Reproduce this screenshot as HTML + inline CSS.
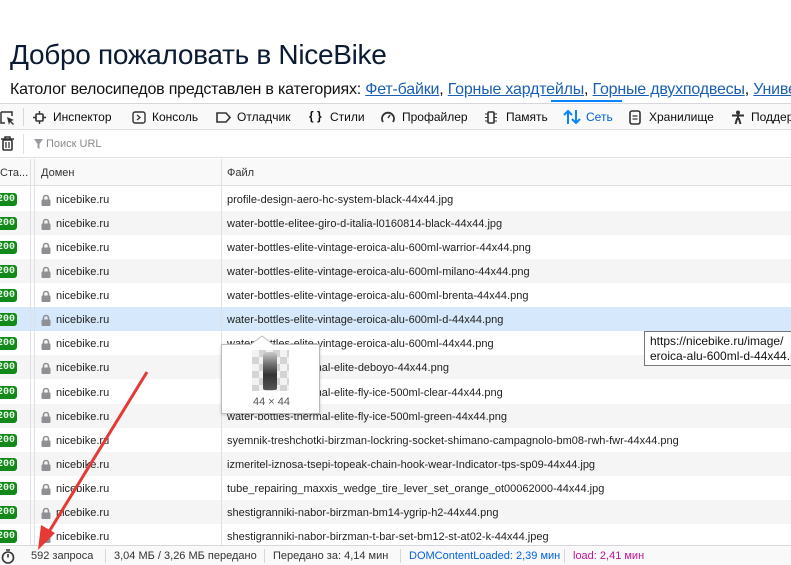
<!DOCTYPE html>
<html><head><meta charset="utf-8"><style>
*{margin:0;padding:0;box-sizing:border-box}
body{width:791px;height:565px;overflow:hidden;background:#fff;font-family:"Liberation Sans","DejaVu Sans",sans-serif;position:relative;color:#0c0c0d}
.a{position:absolute;white-space:nowrap}
h1{position:absolute;left:10px;top:39px;font-size:28px;font-weight:normal;color:#0b1b33;letter-spacing:-0.3px}
.cat{position:absolute;left:10px;top:81px;font-size:16px;color:#111;white-space:nowrap;letter-spacing:-0.2px}
.cat a{color:#1a5fb4;text-decoration:underline}
.tb{position:absolute;left:0;top:103px;width:791px;height:27px;background:#f9f9fa;border-top:1px solid #d7d7db;border-bottom:1px solid #e0e0e2;font-size:12px}
.tb span{position:absolute;top:6px}
.tb2{position:absolute;left:0;top:130px;width:791px;height:28px;background:#fff;border-bottom:1px solid #e0e0e2;font-size:11px;color:#8a8a8f}
.hdr{position:absolute;left:0;top:159px;width:791px;height:27px;background:#f9f9fa;border-bottom:1px solid #e0e0e2;font-size:11px;color:#333}
.row{position:absolute;left:0;width:791px;height:24px;font-size:11px;color:#222}
.row.g{background:#f5f5f6}
.row.s{background:#d6e8fb}
.st{position:absolute;left:-4px;top:6px;width:21px;height:13px;background:#13891a;color:#e8ffe8;border-radius:3px;font-family:"Liberation Mono",monospace;font-size:10px;font-weight:bold;line-height:13px;text-align:right;padding-right:2px}
.lk{position:absolute;left:41px;top:7px;width:10px;height:12px}
.dm{position:absolute;left:56px;top:7px}
.fl{position:absolute;left:227px;top:7px}
.vl{position:absolute;top:159px;width:1px;height:390px;background:#e0e0e2}
.sb{position:absolute;left:0;top:545px;width:791px;height:20px;background:#f9f9fa;border-top:1px solid #d7d7db;font-size:11px;color:#333}
.sb span{position:absolute;top:4px}
.sep{position:absolute;top:3px;width:1px;height:14px;background:#d7d7db}
</style></head><body>
<h1>Добро пожаловать в NiceBike</h1>
<div class="cat">Католог велосипедов представлен в категориях: <a>Фет-байки</a>, <a>Горные хардтейлы</a>, <a>Горные двухподвесы</a>, <a>Униве</a></div>
<div class="a" style="left:551px;top:100px;width:71px;height:2px;background:#0a84ff"></div>
<div class="tb">
<svg class="a" style="left:0;top:6px" width="16" height="16"><path d="M1 2h11v4M1 2v11h4" fill="none" stroke="#333" stroke-width="1.5"/><path d="M7 7l7 3-3 1 3 3-1 1-3-3-1 3z" fill="#333"/></svg>
<div class="a" style="left:23px;top:4px;width:1px;height:18px;background:#d7d7db"></div>
<svg class="a" style="left:33px;top:7px" width="13" height="13"><rect x="3" y="3" width="7" height="7" rx="1" fill="none" stroke="#333" stroke-width="1.6"/><path d="M6.5 0v3M6.5 10v3M0 6.5h3M10 6.5h3" stroke="#333" stroke-width="1.4"/></svg>
<span style="left:53px">Инспектор</span>
<svg class="a" style="left:132px;top:7px" width="14" height="13"><rect x="1" y="1" width="12" height="11" rx="2" fill="none" stroke="#333" stroke-width="1.4"/><path d="M5 4l3 2.5-3 2.5" fill="none" stroke="#333" stroke-width="1.3"/></svg>
<span style="left:152px">Консоль</span>
<svg class="a" style="left:216px;top:8px" width="15" height="11"><path d="M1 1h9l4 4.5-4 4.5H1z" fill="none" stroke="#333" stroke-width="1.6"/></svg>
<span style="left:237px">Отладчик</span>
<span style="left:309px;top:5px;font-weight:bold;font-size:12px">{ }</span>
<span style="left:330px">Стили</span>
<svg class="a" style="left:381px;top:7px" width="14" height="13"><path d="M2 11A6 6 0 1 1 12 11" fill="none" stroke="#333" stroke-width="1.8"/><path d="M7 7l2-3" stroke="#333" stroke-width="1.5"/></svg>
<span style="left:402px">Профайлер</span>
<svg class="a" style="left:484px;top:7px" width="14" height="13"><rect x="4" y="1" width="6" height="11" rx="1" fill="none" stroke="#333" stroke-width="1.6"/><path d="M1 3h3M1 6.5h3M1 10h3M10 3h3M10 6.5h3M10 10h3" stroke="#333" stroke-width="1.1"/></svg>
<span style="left:506px">Память</span>
<svg class="a" style="left:563px;top:5px" width="18" height="16"><path d="M5 15V2M1 6l4-4 4 4M13 1v13M9 10l4 4 4-4" fill="none" stroke="#0a84ff" stroke-width="2"/></svg>
<span style="left:586px;color:#0060df">Сеть</span>
<svg class="a" style="left:629px;top:6px" width="12" height="15"><rect x="1" y="1" width="10" height="13" rx="2" fill="none" stroke="#333" stroke-width="1.6"/><path d="M3.5 6h5M3.5 9h5" stroke="#333" stroke-width="1.3"/></svg>
<span style="left:649px">Хранилище</span>
<svg class="a" style="left:731px;top:6px" width="14" height="15"><circle cx="7" cy="2.5" r="2" fill="#333"/><path d="M1 5.5h12M7 5v5M4.5 14l1.5-5h2l1.5 5" fill="none" stroke="#333" stroke-width="2"/></svg>
<span style="left:751px">Поддер</span>
</div>
<div class="tb2">
<svg class="a" style="left:1px;top:6px" width="13" height="15"><path d="M0 3h13M4 3V1h5v2" fill="none" stroke="#333" stroke-width="1.5"/><rect x="2" y="4" width="9" height="10" rx="1" fill="none" stroke="#333" stroke-width="1.6"/><path d="M5 6v6M8 6v6" stroke="#333" stroke-width="1.3"/></svg>
<div class="a" style="left:23px;top:4px;width:1px;height:20px;background:#e0e0e2"></div>
<svg class="a" style="left:34px;top:9px" width="9" height="10"><path d="M0 0h9L5.5 5v5L3.5 9V5z" fill="#9a9a9f"/></svg>
<span class="a" style="left:46px;top:8px">Поиск URL</span>
</div>
<div class="hdr">
<span class="a" style="left:0;top:8px">Ста...</span>
<span class="a" style="left:41px;top:8px">Домен</span>
<span class="a" style="left:227px;top:8px">Файл</span>
</div>
<div id="rows"></div>
<div class="vl" style="left:30px"></div><div class="vl" style="left:34px"></div><div class="vl" style="left:221px"></div>
<div class="a" style="left:221px;top:344px;width:99px;height:70px;background:#fff;border:1px solid #bbb;box-shadow:0 1px 3px rgba(0,0,0,.2)"></div>
<svg class="a" style="left:250px;top:335px" width="24" height="11"><path d="M0 10L12 1 24 10" fill="#fff" stroke="#bbb"/></svg>
<div class="a" style="left:252px;top:350px;width:37px;height:41px;background:repeating-conic-gradient(#d4d4d4 0 25%,#f2f2f2 0 50%) 0 0/14px 14px"></div>
<div class="a" style="left:263px;top:352px;width:14px;height:38px;background:linear-gradient(#ccc,#777 30%,#333 60%,#555);border-radius:4px 4px 2px 2px"></div>
<span class="a" style="left:253px;top:396px;font-size:11px;color:#555">44 × 44</span>
<div class="a" style="left:644px;top:331px;width:160px;height:35px;background:#fff;border:1px solid #777;font-size:12px;line-height:15px;padding:2px 5px;color:#111">https://nicebike.ru/image/<br>eroica-alu-600ml-d-44x44.p</div>
<div class="sb">
<svg class="a" style="left:1px;top:3px" width="14" height="15"><circle cx="7" cy="8.5" r="5.5" fill="none" stroke="#333" stroke-width="1.6"/><path d="M5 1h4M7 8.5V5" stroke="#333" stroke-width="1.6"/></svg>
<span style="left:31px">592 запроса</span><div class="sep" style="left:105px"></div>
<span style="left:114px">3,04 МБ / 3,26 МБ передано</span><div class="sep" style="left:264px"></div>
<span style="left:273px">Передано за: 4,14 мин</span><div class="sep" style="left:400px"></div>
<span style="left:409px;color:#0060df">DOMContentLoaded: 2,39 мин</span><div class="sep" style="left:564px"></div>
<span style="left:573px;color:#c0158f">load: 2,41 мин</span>
</div>
<svg class="a" style="left:0;top:0" width="791" height="565"><path d="M147 372L47 535" stroke="#e53935" stroke-width="3"/><path d="M38 550L41 525 55 533z" fill="#e53935"/></svg>
<script>
var f=["profile-design-aero-hc-system-black-44x44.jpg","water-bottle-elitee-giro-d-italia-l0160814-black-44x44.jpg","water-bottles-elite-vintage-eroica-alu-600ml-warrior-44x44.png","water-bottles-elite-vintage-eroica-alu-600ml-milano-44x44.png","water-bottles-elite-vintage-eroica-alu-600ml-brenta-44x44.png","water-bottles-elite-vintage-eroica-alu-600ml-d-44x44.png","water-bottles-elite-vintage-eroica-alu-600ml-44x44.png","water-bottles-thermal-elite-deboyo-44x44.png","water-bottles-thermal-elite-fly-ice-500ml-clear-44x44.png","water-bottles-thermal-elite-fly-ice-500ml-green-44x44.png","syemnik-treshchotki-birzman-lockring-socket-shimano-campagnolo-bm08-rwh-fwr-44x44.png","izmeritel-iznosa-tsepi-topeak-chain-hook-wear-Indicator-tps-sp09-44x44.jpg","tube_repairing_maxxis_wedge_tire_lever_set_orange_ot00062000-44x44.jpg","shestigranniki-nabor-birzman-bm14-ygrip-h2-44x44.png","shestigranniki-nabor-birzman-t-bar-set-bm12-st-at02-k-44x44.jpeg"];
var h="";for(var i=0;i<f.length;i++){var c=i==5?"s":(i%2?"g":"");h+='<div class="row '+c+'" style="top:'+(187+i*24.07)+'px"><div class="st">200</div><svg class="lk" viewBox="0 0 10 12"><path d="M2.5 6V4a2.5 2.5 0 0 1 5 0v2" fill="none" stroke="#8f8f94" stroke-width="1.6"/><rect x="0.5" y="5.5" width="9" height="6.5" rx="1" fill="#8f8f94"/></svg><span class="dm a">nicebike.ru</span><span class="fl a">'+f[i]+'</span></div>';}
document.getElementById("rows").innerHTML=h;
</script>
</body></html>
